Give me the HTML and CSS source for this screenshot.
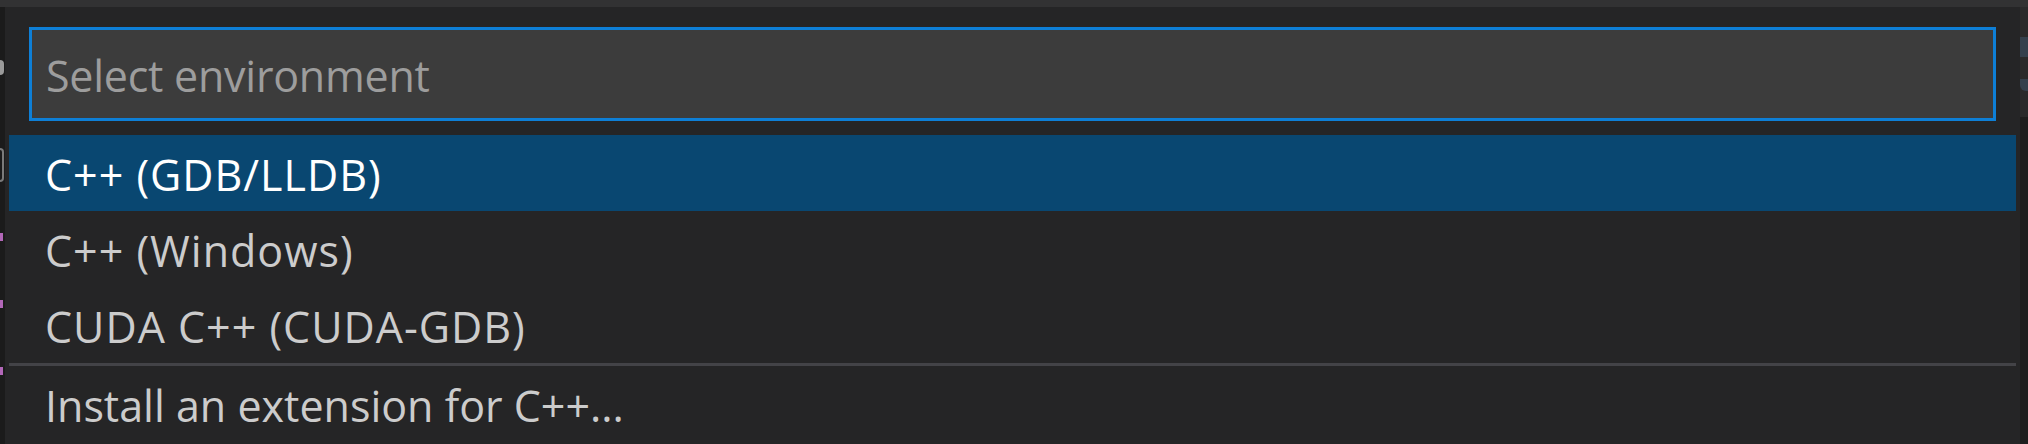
FILE: index.html
```html
<!DOCTYPE html>
<html lang="en">
<head>
<meta charset="utf-8">
<title>Select environment</title>
<link rel="stylesheet" href="styles.css">
</head>
<body>
<div class="topbar"></div>
<div class="main">
  <div class="edge-left">
    <span class="frag frag-chevron"></span>
    <span class="frag frag-c"></span>
    <span class="frag frag-purple f1"></span>
    <span class="frag frag-purple f2"></span>
    <span class="frag frag-purple f3"></span>
  </div>
  <div class="quick-pick">
    <div class="input-box">
      <span class="placeholder">Select environment</span>
    </div>
    <div class="list">
      <div class="row entry selected">C++ (GDB/LLDB)</div>
      <div class="row entry">C++ (Windows)</div>
      <div class="row entry">CUDA C++ (CUDA-GDB)</div>
      <div class="row separated">Install an extension for C++...</div>
    </div>
  </div>
  <div class="edge-right">
    <div class="edge-right-top">
      <span class="frag frag-n1"></span>
      <span class="frag frag-n2"></span>
    </div>
  </div>
</div>
</body>
</html>
```
FILE: styles.css
```css
html, body {
  margin: 0;
  padding: 0;
}
body {
  width: 2028px;
  height: 444px;
  overflow: hidden;
  background: #1e1e1e;
  font-family: "Open Sans", "Noto Sans", sans-serif;
}
.topbar {
  height: 7px;
  background: #323233;
}
.main {
  display: flex;
  height: 437px;
}
.edge-left {
  width: 5px;
  background: #1b1b1b;
  display: flex;
  flex-direction: column;
}
.frag {
  display: block;
}
.frag-chevron {
  margin-top: 53px;
  width: 4px;
  height: 15px;
  background: #9a9a9a;
  border-radius: 0 5px 5px 0;
}
.frag-c {
  margin-top: 73px;
  width: 4px;
  height: 34px;
  border: 2px solid #7a7a7a;
  border-left: none;
  border-radius: 0 10px 10px 0;
  box-sizing: border-box;
}
.frag-purple {
  width: 3px;
  height: 8px;
  background: #b267b8;
}
.f1 { margin-top: 51px; }
.f2 { margin-top: 59px; }
.f3 { margin-top: 59px; }

.quick-pick {
  flex: 1;
  background: #252526;
  padding: 20px 4px 0;
  display: flex;
  flex-direction: column;
}
.input-box {
  margin: 0 20px;
  height: 94px;
  box-sizing: border-box;
  border: 3px solid #0e7fd6;
  background: #3c3c3c;
  padding: 4px 14px 0;
  line-height: 84px;
  font-size: 43px;
}
.placeholder {
  color: #9d9d9d;
  letter-spacing: -0.25px;
}
.list {
  margin-top: 14px;
}
.row {
  height: 76px;
  box-sizing: border-box;
  padding: 3px 0 0 36px;
  line-height: 73px;
  font-size: 43px;
  color: #cccccc;
  white-space: nowrap;
}
.row.entry {
  letter-spacing: 1px;
}
.row.selected {
  background: #094771;
  color: #ffffff;
}
.row.separated {
  border-top: 3px solid #434347;
  height: 79px;
}
.edge-right {
  width: 8px;
  background: #1e1e1e;
}
.edge-right-top {
  height: 110px;
  background: #2a2a2b;
  display: flex;
  flex-direction: column;
}
.frag-n1 {
  margin-top: 30px;
  width: 8px;
  height: 20px;
  background: #34404d;
}
.frag-n2 {
  margin-top: 22px;
  width: 8px;
  height: 12px;
  background: #34404d;
  border-radius: 0 0 0 6px;
}
```
